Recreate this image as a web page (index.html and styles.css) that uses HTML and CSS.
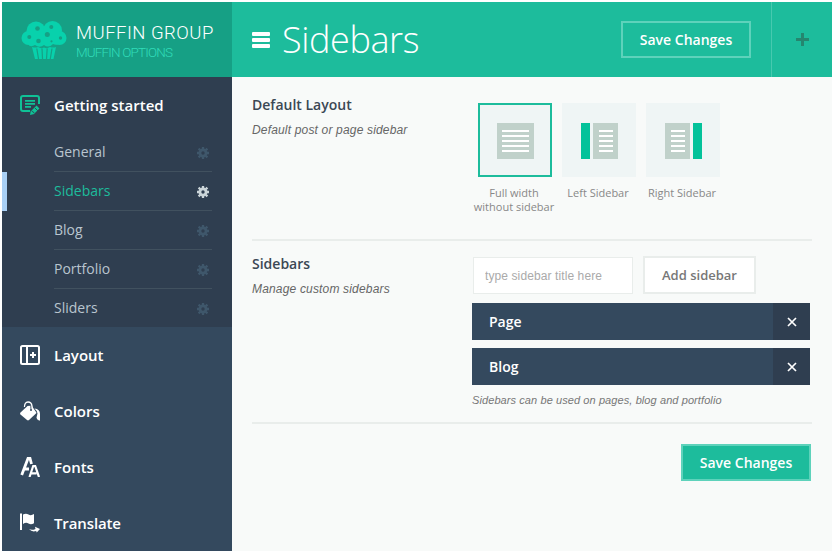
FILE: index.html
```html
<!DOCTYPE html>
<html lang="en">
<head>
<meta charset="utf-8">
<title>Muffin Options</title>
<link rel="stylesheet" href="styles.css">
</head>
<body>
<svg class="defs" width="0" height="0">
  <symbol id="gear" viewBox="0 0 12 12">
    <circle cx="6" cy="6" r="3.1" fill="none" stroke="currentColor" stroke-width="2.8"/>
    <path d="M6 0v2.2M6 9.8V12M0 6h2.2M9.8 6H12M1.600 1.600l1.700 1.700M8.700 8.700l1.700 1.700M1.600 10.400l1.700-1.700M8.700 3.300l1.700-1.700" stroke="currentColor" stroke-width="2.3"/>
  </symbol>
</svg>
<div class="panel">
  <aside class="side">
    <div class="logo">
      <svg class="muffin" width="46" height="40" viewBox="0 0 46 40">
        <g fill="#08d1ac">
          <circle cx="15" cy="11" r="9.5"/><circle cx="31.5" cy="10.5" r="9.5"/>
          <circle cx="7.5" cy="18" r="7"/><circle cx="38.500" cy="18" r="7"/>
          <path d="M8 11h30v13q-3 1.500-6 0-4.500 4.500-9 1-4.500 3.500-9 0-3 2-6 .5z"/>
          <path d="M11 27q3.500 1 6 0 3 2 6 .5 3 1.500 6-.5 3 1 6 0l-2.500 12H14z"/>
        </g>
        <g fill="#16a085">
          <circle cx="16.500" cy="8.500" r="2.300"/><circle cx="30.300" cy="7" r="2"/><circle cx="26.300" cy="14.500" r="2.500"/>
          <circle cx="8.300" cy="17" r="2"/><circle cx="17.500" cy="21" r="2.300"/><circle cx="39.500" cy="18" r="1.700"/><circle cx="30.500" cy="21.300" r="1.100"/>
        </g>
        <path d="M15.800 28.500l2 12M21 28.500l.6 12M26.200 28.500l-.8 12M31 28.500l-2 12" stroke="#16a085" stroke-width="1.200"/>
      </svg>
      <div class="brand"><span class="name">MUFFIN GROUP</span><span class="sub">MUFFIN OPTIONS</span></div>
    </div>
    <section class="open">
      <div class="item">
        <svg width="20" height="20" viewBox="0 0 20 20" fill="none" stroke="#0fc196">
          <path d="M10 16H3Q1 16 1 14V3Q1 1 3 1H17Q19 1 19 3V9" stroke-width="2"/>
          <path d="M5 5.800H15M5 8.800H15M5 11.800H11" stroke-width="1.700"/>
          <path d="M12.500 17.500L18 12" stroke-width="4"/><path d="M10 20l.8-4.500 3.600 3.600z" fill="#0fc196" stroke="none"/>
          <path d="M15 13l2.800 2.800M12 15.800l2.300 2.300" stroke="#2f3e50" stroke-width=".9"/>
        </svg>
        <span>Getting started</span>
      </div>
      <ul class="subs">
        <li><span>General</span><svg class="gear"><use href="#gear"/></svg></li>
        <li class="active"><span>Sidebars</span><svg class="gear"><use href="#gear"/></svg></li>
        <li><span>Blog</span><svg class="gear"><use href="#gear"/></svg></li>
        <li><span>Portfolio</span><svg class="gear"><use href="#gear"/></svg></li>
        <li><span>Sliders</span><svg class="gear"><use href="#gear"/></svg></li>
      </ul>
    </section>
    <div class="item">
      <svg width="20" height="20" viewBox="0 0 20 20" fill="none" stroke="#fff" stroke-width="2"><rect x="1" y="1" width="18" height="18" rx="1.500"/><path d="M7 1v18M10 10h6M13 7v6"/></svg>
      <span>Layout</span>
    </div>
    <div class="item">
      <svg width="20" height="20" viewBox="0 0 20 20">
        <path d="M.5 11.500L7.500 5l4-.5L16 11l.5 1-7.500 7q-1 .8-2 0l-6.500-5.500q-.8-1 0-2z" fill="#fff"/>
        <path d="M4.500 6Q4.500 1 8 1T12 5v3.500" fill="none" stroke="#fff" stroke-width="1.300"/>
        <path d="M5.500 5.800Q7 2.800 9.200 3.500T11 8.500" fill="none" stroke="#34495e" stroke-width=".9"/>
        <circle cx="11" cy="9" r="1" fill="#34495e"/>
        <path d="M14.500 7.500Q20 8 20 13v6.500h-1q-2.500-1-2.500-3l1-4Q17 9.500 14.500 7.500z" fill="#fff"/>
      </svg>
      <span>Colors</span>
    </div>
    <div class="item">
      <svg width="20" height="20" viewBox="0 0 20 20" fill="none" stroke="#fff">
        <path d="M1.700 18L8 1.500h2L11.500 7M4.500 12H9" stroke-width="2.800"/>
        <path d="M9.500 20l3.700-11h2L19 20M11.500 16.300h5" stroke-width="2.200"/>
      </svg>
      <span>Fonts</span>
    </div>
    <div class="item">
      <svg width="20" height="20" viewBox="0 0 20 20" fill="#fff">
        <path d="M0 .5h2V17H0zM3 1.500Q6 0 8.500 1.500T14 1v9.200Q11 12 8.500 10.500T3 11z"/>
        <path d="M9 16q3 1.600 6.500-.1l-.5-2.100 5 2.200-3.300 3.500-.5-1.500Q12 19.500 9 16z"/>
      </svg>
      <span class="tight">Translate</span>
    </div>
  </aside>
  <main class="main">
    <header class="top">
      <svg width="18" height="16" viewBox="0 0 18 16" fill="#fff"><rect width="18" height="4" rx="1"/><rect y="6" width="18" height="4" rx="1"/><rect y="12" width="18" height="4" rx="1"/></svg>
      <h1>Sidebars</h1>
      <button class="save">Save Changes</button>
      <div class="plus"><svg width="13" height="13" viewBox="0 0 13 13"><path d="M0 6.500h13M6.500 0v13" stroke="#25866f" stroke-width="3"/></svg></div>
    </header>
    <div class="content">
      <section class="row layout">
        <div class="desc"><h2>Default Layout</h2><p>Default post or page sidebar</p></div>
        <div class="choices">
          <div class="choice selected">
            <svg width="74" height="74" viewBox="0 0 74 74"><path d="M19 20h37v36H19z" fill="#c0d1ca"/><path d="M24 28h27M24 33h27M24 38h27M24 43h27M24 48h27" stroke="#fff" stroke-width="2"/></svg>
            <span>Full width<br>without sidebar</span>
          </div>
          <div class="choice">
            <svg width="74" height="74" viewBox="0 0 74 74"><path d="M19 20h9v36h-9z" fill="#03c29a"/><path d="M31 20h25v36H31z" fill="#c0d1ca"/><path d="M37 28h14M37 33h14M37 38h14M37 43h14M37 48h14" stroke="#fff" stroke-width="2"/></svg>
            <span>Left Sidebar</span>
          </div>
          <div class="choice">
            <svg width="74" height="74" viewBox="0 0 74 74"><path d="M47 20h9v36h-9z" fill="#03c29a"/><path d="M19 20h25v36H19z" fill="#c0d1ca"/><path d="M25 28h14M25 33h14M25 38h14M25 43h14M25 48h14" stroke="#fff" stroke-width="2"/></svg>
            <span>Right Sidebar</span>
          </div>
        </div>
      </section>
      <section class="row custom">
        <div class="desc"><h2>Sidebars</h2><p>Manage custom sidebars</p></div>
        <div class="fields">
          <div class="add"><input type="text" placeholder="type sidebar title here"><button>Add sidebar</button></div>
          <div class="bar"><span>Page</span><i><svg width="10" height="10" viewBox="0 0 10 10"><path d="M1 1l8 8M9 1L1 9" stroke="#fff" stroke-width="1.700"/></svg></i></div>
          <div class="bar"><span>Blog</span><i><svg width="10" height="10" viewBox="0 0 10 10"><path d="M1 1l8 8M9 1L1 9" stroke="#fff" stroke-width="1.700"/></svg></i></div>
          <p class="note">Sidebars can be used on pages, blog and portfolio</p>
        </div>
      </section>
      <div class="foot"><button class="save">Save Changes</button></div>
    </div>
  </main>
</div>
</body>
</html>
```
FILE: styles.css
```css
* { box-sizing: border-box; margin: 0; padding: 0; }
body { background: #fff; font-family: "Open Sans", sans-serif; overflow: hidden; }
svg { display: block; flex: none; }
.defs { position: absolute; }
.panel { display: flex; width: 830px; height: 549px; margin: 2px; overflow: hidden; }
.side { width: 230px; background: #34495e; color: #fff; }
.logo { height: 75px; background: #16a085; display: flex; padding: 18px 0 0 19px; }
.brand { font-family: Roboto, sans-serif; font-weight: 300; padding: 2px 0 0 9px; white-space: nowrap; }
.brand span { display: block; }
.name { font-size: 18.5px; line-height: 22px; letter-spacing: .48px; }
.sub { font-size: 13.5px; line-height: 16px; letter-spacing: -.85px; color: #30dcb9; }
.open { background: #2f3e50; }
.item { height: 56px; display: flex; align-items: center; gap: 14px; padding-left: 18px; font-size: 15px; font-weight: 600; }
.tight { letter-spacing: -.12px; }
.subs { list-style: none; }
.subs li { height: 39px; display: flex; justify-content: space-between; align-items: center; margin-left: 52px; width: 158px; padding: 0 3px 2px 0; border-bottom: 1px solid #41515f; font-size: 14px; color: #b9c5cf; }
.subs li:last-child { height: 38px; border: 0; }
.subs .active { width: 210px; margin-left: 0; padding: 0 3px 3px 47px; border-left: 5px solid #a9d0f5; color: #1dbc9c; border-bottom: 0; background: linear-gradient(#41515f, #41515f) 47px 38px / 158px 1px no-repeat; }
.gear { width: 12px; height: 12px; color: #3f576b; margin-top: 3px; }
.active .gear { color: #cbd5d9; }
.main { width: 600px; background: #f8faf9; }
.top { height: 75px; background: #1dbc9c; display: flex; align-items: center; padding-left: 20px; }
.top h1 { flex: 1; color: #fff; font-size: 36px; font-weight: 300; margin-left: 12px; line-height: 75px; letter-spacing: -.4px; }
.save { width: 130px; height: 37px; border: 2px solid #5ed2bb; background: #1dbc9c; color: #fff; font: 600 14px "Open Sans", sans-serif; }
.plus { width: 61px; height: 75px; margin-left: 20px; border-left: 1px solid #47c9af; display: flex; align-items: center; justify-content: center; }
.content { padding: 0 20px; }
.row { display: flex; border-bottom: 2px solid #e9edeb; }
.layout { height: 164px; padding-top: 18px; }
.custom { height: 183px; padding-top: 13px; }
.desc { width: 220px; }
h2 { font-size: 14px; font-weight: 600; line-height: 20px; color: #3b4854; }
.desc p { font: italic 12px/16px "Liberation Sans", sans-serif; color: #666; margin-top: 7px; letter-spacing: .17px; }
.choices { display: flex; padding-top: 8px; }
.choice { width: 84px; display: flex; flex-direction: column; align-items: center; }
.choice svg { background: #eff5f5; margin-left: 2px; }
.choice.selected svg { outline: 2px solid #1dbc9c; outline-offset: -2px; }
.choice span { font-size: 11px; line-height: 14px; color: #888; margin-top: 9px; text-align: center; white-space: nowrap; }
.fields { width: 338px; padding-top: 2px; }
.add { display: flex; align-items: flex-end; gap: 10px; height: 38px; padding-left: 1px; margin-bottom: 9px; }
.add input { width: 160px; height: 37px; border: 1px solid #e9edeb; background: #fff; padding-left: 11px; font: 12px "Liberation Sans", sans-serif; letter-spacing: .1px; }
.add input::placeholder { color: #aaa; }
.add button { width: 113px; height: 38px; border: 2px solid #e9edeb; background: #fff; color: #777; font: 600 13px "Open Sans", sans-serif; }
.bar { height: 37px; background: #34495e; color: #fff; display: flex; align-items: center; justify-content: space-between; padding-left: 17px; margin-bottom: 8px; font-size: 14px; font-weight: 600; }
.bar i { width: 37px; height: 37px; background: #2f3e50; display: flex; align-items: center; justify-content: center; padding: 1px 0 0 1px; }
.note { font: italic 11px/14px "Liberation Sans", sans-serif; color: #777; white-space: nowrap; letter-spacing: .09px; }
.foot { display: flex; justify-content: flex-end; padding: 20px 1px 0 0; }
```
